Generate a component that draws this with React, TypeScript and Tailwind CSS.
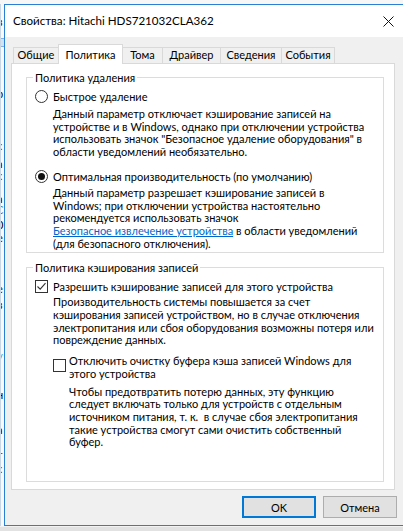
import React from "react";

const tabs = [
  { label: "Общие", w: "w-[46px]" },
  { label: "Политика", w: "w-[65px]", active: true },
  { label: "Тома", w: "w-[41px]" },
  { label: "Драйвер", w: "w-[59px]" },
  { label: "Сведения", w: "w-[62px]" },
  { label: "События", w: "w-[54px]" },
];

function Radio({ checked }: { checked?: boolean }) {
  return (
    <span className="w-[13px] h-[13px] shrink-0 rounded-full border border-[#333333] bg-white flex items-center justify-center">
      {checked && <span className="w-[7px] h-[7px] rounded-full bg-[#111111]" />}
    </span>
  );
}

function Check({ checked }: { checked?: boolean }) {
  return (
    <span className="w-[13px] h-[13px] shrink-0 border border-[#333333] bg-white flex items-center justify-center">
      {checked && (
        <svg width="11" height="11" viewBox="0 0 11 11">
          <path d="M1.5 5.5 L4.2 8.2 L9.5 2.2" fill="none" stroke="#333333" strokeWidth="1.1" />
        </svg>
      )}
    </span>
  );
}

function Lines({ lines }: { lines: React.ReactNode[] }) {
  return (
    <div className="leading-[12.7px] whitespace-nowrap">
      {lines.map((l, i) => (
        <div key={i}>{l}</div>
      ))}
    </div>
  );
}

export default function App() {
  return (
    <div className="w-[403px] h-[531px] overflow-hidden bg-[#f4f4f4] flex flex-col font-['Lato',sans-serif] text-[11px] text-black">
      {/* Desktop behind, top edge */}
      <div className="h-[4px] shrink-0 bg-[#f7f7f7]" />

      <div className="flex h-[522px] shrink-0">
        {/* Window behind, left edge */}
        <div className="w-[4px] shrink-0 relative overflow-hidden bg-[#f9f9f9] border-l border-[#c9d6e3] text-[11px] leading-[9px]">
          <span className="absolute left-[-4px] top-[13px]">в</span>
          <div className="absolute left-0 top-[34px] w-[4px] h-[9px] bg-[#cde4f7] border-y border-[#7eb4ea]" />
          <span className="absolute left-[-4px] top-[85px]">р</span>
          <span className="absolute left-[-4px] top-[137px]">с</span>
          <span className="absolute left-[-4px] top-[155px]">а</span>
          <span className="absolute left-[-4px] top-[167px]">с</span>
          <span className="absolute left-[-4px] top-[190px]">а</span>
          <span className="absolute left-[-5px] top-[201px] text-[#1a7fd0]">С</span>
          <span className="absolute left-[-4px] top-[216px]">0</span>
          <span className="absolute left-[-4px] top-[229px]">е</span>
          <span className="absolute left-[-4px] top-[280px]">е</span>
          <span className="absolute left-[-4px] top-[296px]">в</span>
          <span className="absolute left-[-3px] top-[350px] text-[#1a7fd0]">/</span>
          <span className="absolute left-[-4px] top-[386px]">н</span>
          <span className="absolute left-[-4px] top-[421px]">а</span>
          <span className="absolute left-[-4px] top-[446px] text-[#7a1020]">т</span>
          <span className="absolute left-[-4px] top-[460px]">с</span>
        </div>

        {/* Dialog */}
        <div className="w-[401px] shrink-0 h-[522px] border border-[#2a7fd4] bg-[#f0f0f0] flex flex-col">
          {/* Title bar */}
          <div className="h-[32px] shrink-0 bg-white flex items-center pl-[8px]">
            <span className="whitespace-nowrap text-[11.6px]">Свойства: Hitachi HDS721032CLA362</span>
            <svg className="ml-auto mr-[10px]" width="11" height="11" viewBox="0 0 11 11">
              <path d="M0.5 0.5 L10.5 10.5 M10.5 0.5 L0.5 10.5" stroke="#111111" strokeWidth="1" />
            </svg>
          </div>

          {/* Tabs */}
          <div className="h-[26px] shrink-0 flex items-end pl-[8px]">
            {tabs.map((t) =>
              t.active ? (
                <div
                  key={t.label}
                  className={`${t.w} h-[20px] -ml-px -mb-px relative z-10 bg-white border border-b-0 border-[#d9d9d9] flex items-start justify-center pt-[2px] whitespace-nowrap`}
                >
                  {t.label}
                </div>
              ) : (
                <div
                  key={t.label}
                  className={`${t.w} h-[16px] -ml-px bg-[#f0f0f0] border border-b-0 border-[#d9d9d9] flex items-center justify-center whitespace-nowrap first:ml-0`}
                >
                  {t.label}
                </div>
              ),
            )}
          </div>

          {/* Panel */}
          <div className="ml-[6px] w-[384px] h-[427px] shrink-0 bg-white border border-[#d9d9d9] pt-[7px] pl-[14px]">
            <fieldset className="w-[358px] border border-[#dcdcdc] pl-[8px] pb-[2px]">
              <legend className="px-[2px] -ml-[2px] leading-[13px]">Политика удаления</legend>
              <div className="mt-[6px] flex items-center gap-[5px] leading-[13px]">
                <Radio />
                <span className="whitespace-nowrap">Быстрое удаление</span>
              </div>
              <div className="mt-[5px] pl-[18px]">
                <Lines
                  lines={[
                    "Данный параметр отключает кэширование записей на",
                    "устройстве и в Windows, однако при отключении устройства",
                    "использовать значок \"Безопасное удаление оборудования\" в",
                    "области уведомлений необязательно.",
                  ]}
                />
              </div>
              <div className="mt-[11px] flex items-center gap-[5px] leading-[13px]">
                <Radio checked />
                <span className="whitespace-nowrap">Оптимальная производительность (по умолчанию)</span>
              </div>
              <div className="mt-[4px] pl-[18px]">
                <Lines
                  lines={[
                    "Данный параметр разрешает кэширование записей в",
                    "Windows; при отключении устройства настоятельно",
                    "рекомендуется использовать значок",
                    <>
                      <span className="text-[#0066cc] underline">Безопасное извлечение устройства</span> в области уведомлений
                    </>,
                    "(для безопасного отключения).",
                  ]}
                />
              </div>
            </fieldset>

            <fieldset className="mt-[8px] w-[358px] border border-[#dcdcdc] pl-[8px] pb-[32px]">
              <legend className="px-[2px] -ml-[2px] leading-[13px]">Политика кэширования записей</legend>
              <div className="mt-[6px] flex items-center gap-[5px] leading-[13px]">
                <Check checked />
                <span className="whitespace-nowrap">Разрешить кэширование записей для этого устройства</span>
              </div>
              <div className="mt-[3px] pl-[18px]">
                <Lines
                  lines={[
                    "Производительность системы повышается за счет",
                    "кэширования записей устройством, но в случае отключения",
                    "электропитания или сбоя оборудования возможны потеря или",
                    "повреждение данных.",
                  ]}
                />
                <div className="mt-[8px] flex items-start gap-[3px]">
                  <span className="mt-[4px]">
                    <Check />
                  </span>
                  <Lines lines={["Отключить очистку буфера кэша записей Windows для", "этого устройства"]} />
                </div>
                <div className="mt-[5px] pl-[16px]">
                  <Lines
                    lines={[
                      "Чтобы предотвратить потерю данных, эту функцию",
                      "следует включать только для устройств с отдельным",
                      "источником питания, т. к.\u00a0 в случае сбоя электропитания",
                      "такие устройства смогут сами очистить собственный",
                      "буфер.",
                    ]}
                  />
                </div>
              </div>
            </fieldset>
          </div>

          {/* Buttons */}
          <div className="mt-[6px] flex gap-[7px] pl-[237px]">
            <button className="w-[74px] h-[22px] bg-[#e1e1e1] border-2 border-[#0078d7] leading-none">OK</button>
            <button className="w-[74px] h-[22px] bg-[#e1e1e1] border border-[#adadad] leading-none">Отмена</button>
          </div>
        </div>
      </div>

      {/* Desktop behind, bottom edge */}
      <div className="flex-1 bg-[#e2e2e2] border-t border-[#f2f2f2]" />
    </div>
  );
}
